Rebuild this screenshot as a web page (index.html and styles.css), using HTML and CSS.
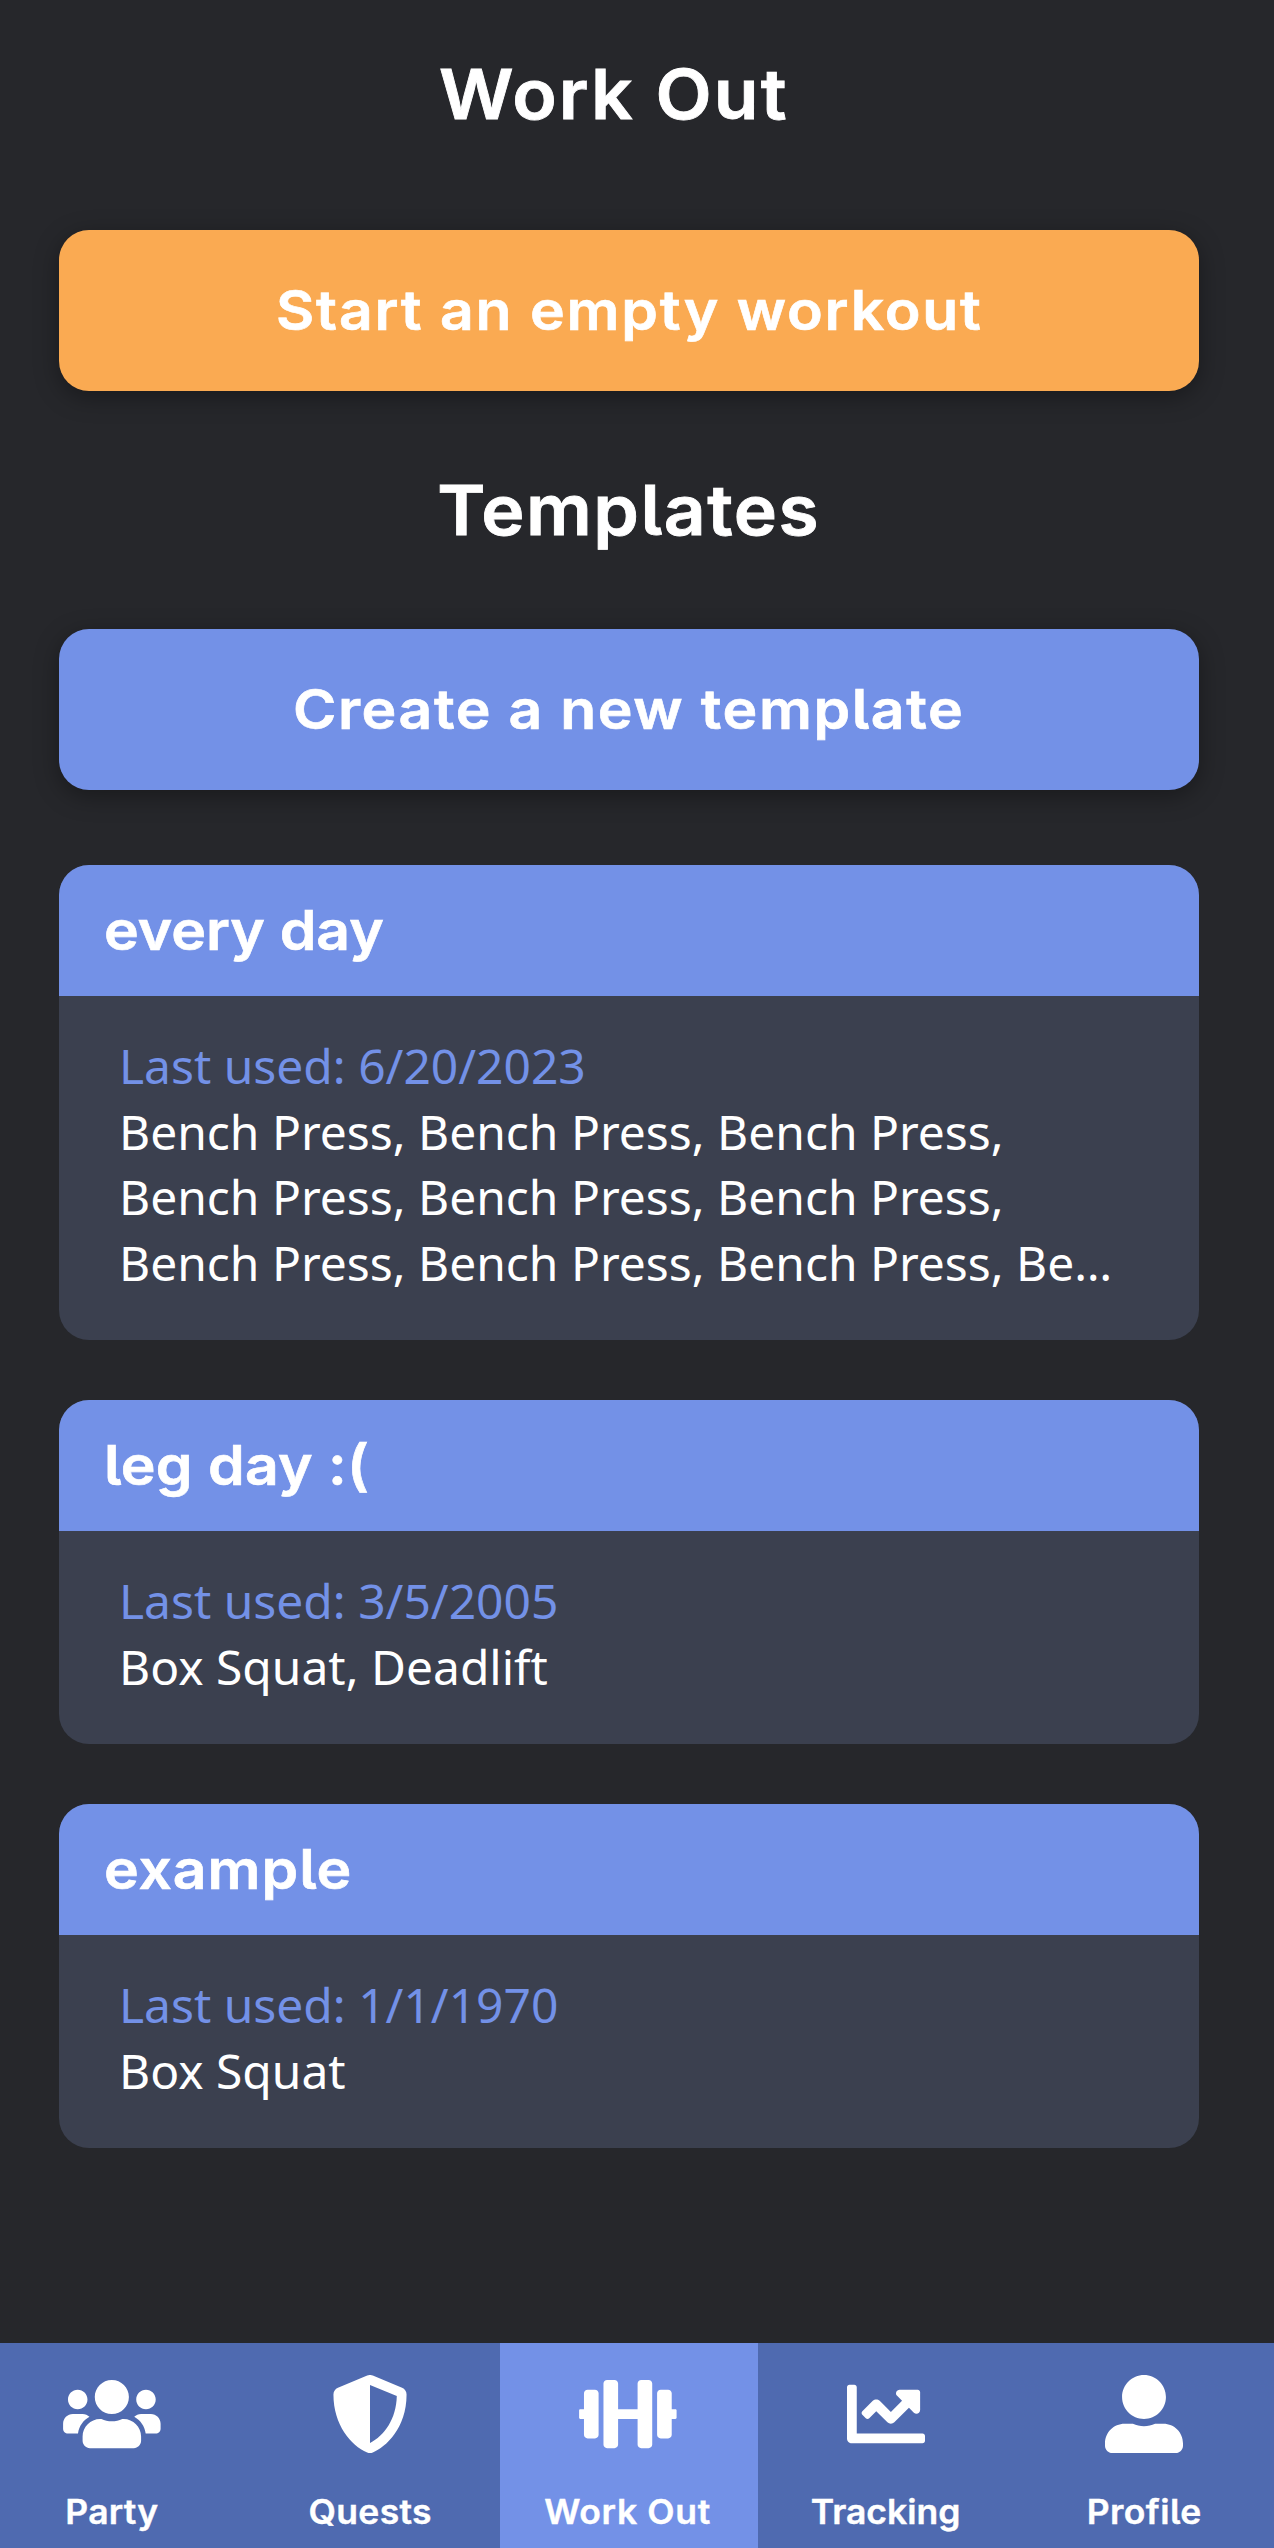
FILE: index.html
```html
<!DOCTYPE html>
<html lang="en">
<head>
<meta charset="utf-8">
<title>Work Out</title>
<link rel="stylesheet" href="styles.css">
</head>
<body>
<div class="app">
  <main class="content">
    <h1 class="title"><span class="wide title-label">Work Out</span></h1>
    <button class="button button-primary"><span class="wide start-label">Start an empty workout</span></button>
    <h2 class="subtitle"><span class="wide subtitle-label">Templates</span></h2>
    <button class="button button-secondary"><span class="wide create-label">Create a new template</span></button>
    <section class="templates">
      <article class="card">
        <h3 class="card-header"><span class="wide">every day</span></h3>
        <div class="card-body">
          <p class="last-used">Last used: 6/20/2023</p>
          <p>Bench Press, Bench Press, Bench Press,<br>Bench Press, Bench Press, Bench Press,<br>Bench Press, Bench Press, Bench Press, Be…</p>
        </div>
      </article>
      <article class="card">
        <h3 class="card-header"><span class="wide name-leg">leg day :(</span></h3>
        <div class="card-body">
          <p class="last-used">Last used: 3/5/2005</p>
          <p>Box Squat, Deadlift</p>
        </div>
      </article>
      <article class="card">
        <h3 class="card-header"><span class="wide name-example">example</span></h3>
        <div class="card-body">
          <p class="last-used">Last used: 1/1/1970</p>
          <p>Box Squat</p>
        </div>
      </article>
    </section>
  </main>
  <nav class="tabs">
    <a class="tab">
      <svg class="icon icon-wide" viewBox="0 0 640 512"><path d="M96 224c35.3 0 64-28.7 64-64s-28.7-64-64-64-64 28.700-64 64 28.700 64 64 64zm448 0c35.300 0 64-28.700 64-64s-28.700-64-64-64-64 28.700-64 64 28.700 64 64 64zm32 32h-64c-17.600 0-33.500 7.100-45.100 18.600 40.300 22.100 68.900 62 75.100 109.400h66c17.700 0 32-14.300 32-32v-32c0-35.300-28.700-64-64-64zm-256 0c61.900 0 112-50.100 112-112S381.900 32 320 32 208 82.100 208 144s50.100 112 112 112zm76.800 32h-8.300c-20.800 10-43.900 16-68.500 16s-47.600-6-68.500-16h-8.300C179.600 288 128 339.600 128 403.200V432c0 26.500 21.500 48 48 48h288c26.500 0 48-21.500 48-48v-28.800c0-63.600-51.600-115.200-115.200-115.200zm-223.700-13.400C161.500 263.100 145.600 256 128 256H64c-35.300 0-64 28.700-64 64v32c0 17.700 14.300 32 32 32h65.900c6.300-47.400 34.900-87.300 75.200-109.400z"/></svg>
      <span class="tab-label wide label-party">Party</span>
    </a>
    <a class="tab">
      <svg class="icon" viewBox="0 0 512 512"><path d="M466.5 83.7l-192-80a48.15 48.15 0 0 0-36.9 0l-192 80C27.7 91.1 16 108.6 16 128c0 198.500 114.500 335.700 221.500 380.300 11.800 4.900 25.100 4.900 36.900 0C360.100 472.600 496 349.300 496 128c0-19.400-11.700-36.900-29.500-44.300zM256.100 446.300l-.1-381 175.900 73.300c-3.300 151.400-82.100 261.100-175.800 307.700z"/></svg>
      <span class="tab-label wide label-quests">Quests</span>
    </a>
    <a class="tab tab-active">
      <svg class="icon icon-wide" viewBox="0 0 640 512"><path d="M104 96H56c-13.300 0-24 10.700-24 24v104H8c-4.400 0-8 3.600-8 8v48c0 4.400 3.600 8 8 8h24v104c0 13.300 10.700 24 24 24h48c13.300 0 24-10.700 24-24V120c0-13.300-10.700-24-24-24zm528 128h-24V120c0-13.300-10.700-24-24-24h-48c-13.300 0-24 10.700-24 24v272c0 13.300 10.700 24 24 24h48c13.300 0 24-10.700 24-24V288h24c4.400 0 8-3.600 8-8v-48c0-4.400-3.600-8-8-8zM456 32h-48c-13.300 0-24 10.700-24 24v168H256V56c0-13.300-10.700-24-24-24h-48c-13.300 0-24 10.700-24 24v400c0 13.300 10.700 24 24 24h48c13.300 0 24-10.700 24-24V288h128v168c0 13.300 10.700 24 24 24h48c13.300 0 24-10.700 24-24V56c0-13.300-10.700-24-24-24z"/></svg>
      <span class="tab-label wide label-workout">Work Out</span>
    </a>
    <a class="tab">
      <svg class="icon" viewBox="0 0 512 512"><path d="M496 384H64V80c0-8.840-7.160-16-16-16H16C7.160 64 0 71.160 0 80v336c0 17.670 14.330 32 32 32h464c8.840 0 16-7.160 16-16v-32c0-8.840-7.160-16-16-16zM464 96H345.940c-21.380 0-32.090 25.850-16.970 40.970l32.400 32.400L288 242.750l-73.370-73.370c-12.500-12.500-32.760-12.500-45.250 0l-68.690 68.690c-6.250 6.250-6.250 16.380 0 22.630l22.620 22.620c6.250 6.250 16.380 6.250 22.630 0L192 237.250l73.370 73.370c12.500 12.500 32.760 12.500 45.250 0l96-96 32.400 32.400c15.120 15.120 40.970 4.410 40.970-16.970V112c.01-8.840-7.150-16-15.990-16z"/></svg>
      <span class="tab-label wide">Tracking</span>
    </a>
    <a class="tab">
      <svg class="icon" viewBox="0 0 512 512"><path d="M256 288c79.500 0 144-64.500 144-144S335.500 0 256 0 112 64.500 112 144s64.500 144 144 144zm128 32h-55.100c-22.200 10.200-46.900 16-72.900 16s-50.600-5.800-72.900-16H128C57.300 320 0 377.300 0 448v16c0 26.500 21.500 48 48 48h416c26.500 0 48-21.500 48-48v-16c0-70.700-57.300-128-128-128z"/></svg>
      <span class="tab-label wide label-profile">Profile</span>
    </a>
  </nav>
</div>
</body>
</html>
```
FILE: styles.css
```css
* { box-sizing: border-box; margin: 0; padding: 0; }

body {
  background: #26272b;
  color: #fff;
  font-family: "Noto Sans", sans-serif;
  font-size: 47.950px;
}

.app {
  display: flex;
  flex-direction: column;
  height: 2548px;
  overflow: hidden;
}

.content {
  flex: 1;
  display: flex;
  flex-direction: column;
  padding: 0 75px 0 59px;
}

.title, .subtitle, .button, .card-header, .tab-label {
  font-family: Inter, sans-serif;
  font-weight: 600;
  font-feature-settings: "cv05";
  white-space: nowrap;
}

/* Slightly extended, sturdier letterforms for headings and labels */
.wide {
  display: inline-block;
  transform: scaleX(1.06);
  -webkit-text-stroke: 0.012em #fff;
}

.title {
  margin-right: 30px;
  font-size: 69px;
  line-height: 189px;
  height: 190px;
  text-align: center;
}

.title-label { letter-spacing: 2px; }

.subtitle {
  font-size: 69px;
  line-height: 239px;
  height: 238px;
  text-align: center;
}

.subtitle-label { letter-spacing: 1.400px; }

.button {
  display: flex;
  justify-content: center;
  height: 161px;
  border: 0;
  border-radius: 30px;
  color: #fff;
  font-size: 55.500px;
  line-height: 160px;
  box-shadow: 0 6px 24px rgba(0, 0, 0, 0.35);
}

.button-primary { margin-top: 40px; background: #faaa52; }
.button-secondary { background: #7391e7; }
.start-label { letter-spacing: 1.700px; }
.create-label { letter-spacing: 1.500px; }

.templates {
  display: flex;
  flex-direction: column;
  gap: 60px;
  margin-top: 75px;
}

.card {
  overflow: hidden;
  border-radius: 30px;
  background: #3b404f;
}

.card-header {
  height: 131px;
  padding-left: 45px;
  background: #7391e7;
  font-size: 55.500px;
  line-height: 130px;
}

.card-header .wide { transform-origin: left; }
.name-leg { letter-spacing: 0.250px; }
.name-example { letter-spacing: 0.900px; }

.card-body {
  padding: 37px 60px 45px;
  line-height: 65.500px;
  white-space: nowrap;
}

.last-used { color: #7391e7; }

.tabs {
  display: flex;
  width: 1290px;
  height: 205px;
  margin-left: -16px;
  background: #4f6ab0;
}

.tab {
  display: flex;
  flex-direction: column;
  align-items: center;
  width: 258px;
  padding: 32px 2px 0 0;
}

.tab-active { background: #7391e7; }

.icon { width: 78px; height: 78px; fill: #fff; }
.icon-wide { width: 97.700px; }

.tab-label {
  margin-top: 39px;
  font-size: 33.500px;
  line-height: 40px;
}

.label-party { letter-spacing: 0.200px; }
.label-quests { letter-spacing: 0.300px; }
.label-workout { letter-spacing: 0.600px; }
.label-profile { letter-spacing: 0.400px; }
```
